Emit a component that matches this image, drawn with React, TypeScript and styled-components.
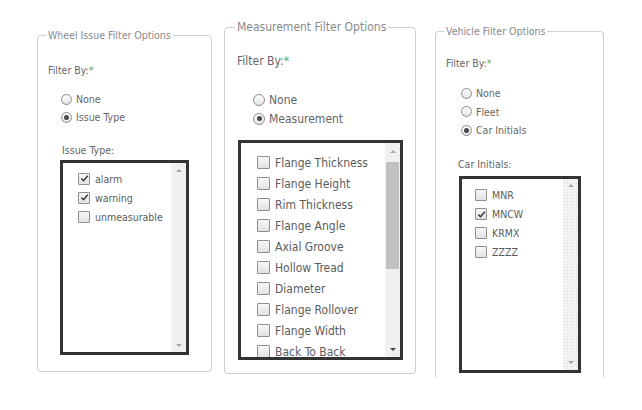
import React from 'react'
import styled, { createGlobalStyle } from 'styled-components'

type M = {
  top: number
  ml: number
  width: number
  height: number
  open?: boolean
  fs: number
  lh: number
  pad: number
  filterGap: number
  radioIndent: number
  radioGap: number
  rowH: number
  radio: number
  labelGap: number
  labelIndent: number
  boxGap: number
  boxIndent: number
  boxW: number
  boxH: number
  itemPadL: number
  itemPadT: number
  itemH: number
  check: number
  bar: number
  arrowH: number
  thumb?: [number, number]
  dotted?: boolean
  darkDown?: boolean
}

type PanelData = {
  title: string
  radios: string[]
  selected: number
  label?: string
  items: string[]
  checked: string[]
  m: M
}

const panels: PanelData[] = [
  {
    title: 'Wheel Issue Filter Options',
    radios: ['None', 'Issue Type'],
    selected: 1,
    label: 'Issue Type:',
    items: ['alarm', 'warning', 'unmeasurable'],
    checked: ['alarm', 'warning'],
    m: {
      top: 28, ml: 37, width: 175, height: 344, fs: 10.5, lh: 14, pad: 10,
      filterGap: 21, radioIndent: 13, radioGap: 13, rowH: 18, radio: 11,
      labelGap: 17, labelIndent: 14, boxGap: 3, boxIndent: 12, boxW: 129, boxH: 195,
      itemPadL: 15, itemPadT: 6, itemH: 19, check: 12, bar: 15, arrowH: 14,
    },
  },
  {
    title: 'Measurement Filter Options',
    radios: ['None', 'Measurement'],
    selected: 1,
    items: [
      'Flange Thickness', 'Flange Height', 'Rim Thickness', 'Flange Angle', 'Axial Groove',
      'Hollow Tread', 'Diameter', 'Flange Rollover', 'Flange Width', 'Back To Back',
    ],
    checked: [],
    m: {
      top: 19, ml: 12, width: 192, height: 355, fs: 12, lh: 16, pad: 12,
      filterGap: 18, radioIndent: 16, radioGap: 21, rowH: 19, radio: 12,
      labelGap: 0, labelIndent: 0, boxGap: 12, boxIndent: 1, boxW: 165, boxH: 220,
      itemPadL: 16, itemPadT: 9, itemH: 21, check: 13, bar: 15, arrowH: 16,
      thumb: [3, 107], darkDown: true,
    },
  },
  {
    title: 'Vehicle Filter Options',
    radios: ['None', 'Fleet', 'Car Initials'],
    selected: 2,
    label: 'Car Initials:',
    items: ['MNR', 'MNCW', 'KRMX', 'ZZZZ'],
    checked: ['MNCW'],
    m: {
      top: 24, ml: 19, width: 169, height: 353, open: true, fs: 10.5, lh: 14, pad: 10,
      filterGap: 18, radioIndent: 15, radioGap: 14, rowH: 18.5, radio: 11,
      labelGap: 17, labelIndent: 12, boxGap: 5, boxIndent: 13, boxW: 122, boxH: 197,
      itemPadL: 13, itemPadT: 7, itemH: 19, check: 12, bar: 15, arrowH: 14, dotted: true,
    },
  },
]

const GlobalStyle = createGlobalStyle`
  html, body { margin: 0; padding: 0; background: #ffffff; }
  body { font-family: "DejaVu Sans Condensed", "DejaVu Sans", sans-serif; }
`

const Page = styled.div`
  width: 642px;
  height: 410px;
  display: flex;
  align-items: flex-start;
  overflow: hidden;
`

const Fieldset = styled.fieldset<{ $m: M }>`
  box-sizing: border-box;
  margin: ${(p) => p.$m.top}px 0 0 ${(p) => p.$m.ml}px;
  width: ${(p) => p.$m.width}px;
  height: ${(p) => p.$m.height}px;
  padding: 0 ${(p) => p.$m.pad}px;
  border: 1px solid #cfcfcf;
  border-bottom: ${(p) => (p.$m.open ? 'none' : '1px solid #cfcfcf')};
  border-radius: ${(p) => (p.$m.open ? '4px 4px 0 0' : '4px')};
  font-size: ${(p) => p.$m.fs}px;
  line-height: ${(p) => p.$m.lh}px;
  color: #666;
  min-width: 0;
`

const Legend = styled.legend`
  padding: 0 2px;
  margin-left: -2px;
  color: #8a8a8a;
`

const FilterBy = styled.div<{ $m: M }>`
  margin-top: ${(p) => p.$m.filterGap}px;
  color: #666;
`

const Star = styled.span`
  color: #3cb371;
`

const RadioGroup = styled.div<{ $m: M }>`
  margin: ${(p) => p.$m.radioGap}px 0 0 ${(p) => p.$m.radioIndent}px;
  display: flex;
  flex-direction: column;
`

const RadioRow = styled.div<{ $m: M }>`
  display: flex;
  align-items: center;
  gap: 4px;
  height: ${(p) => p.$m.rowH}px;
`

const RadioDot = styled.span<{ $size: number; $on: boolean }>`
  box-sizing: border-box;
  width: ${(p) => p.$size}px;
  height: ${(p) => p.$size}px;
  border-radius: 50%;
  border: 1px solid #8c8c8c;
  background: linear-gradient(#ffffff, #e4e4e4);
  display: flex;
  align-items: center;
  justify-content: center;
  &::after {
    content: '';
    display: ${(p) => (p.$on ? 'block' : 'none')};
    width: ${(p) => Math.round(p.$size * 0.45)}px;
    height: ${(p) => Math.round(p.$size * 0.45)}px;
    border-radius: 50%;
    background: #4a4a4a;
  }
`

const FieldLabel = styled.div<{ $m: M }>`
  margin: ${(p) => p.$m.labelGap}px 0 0 ${(p) => p.$m.labelIndent}px;
`

const ListBox = styled.div<{ $m: M }>`
  box-sizing: border-box;
  margin: ${(p) => p.$m.boxGap}px 0 0 ${(p) => p.$m.boxIndent}px;
  width: ${(p) => p.$m.boxW}px;
  height: ${(p) => p.$m.boxH}px;
  border: 3px solid #333;
  display: flex;
  overflow: hidden;
  background: #fff;
`

const Items = styled.div<{ $m: M }>`
  flex: 1;
  padding: ${(p) => p.$m.itemPadT}px 0 0 ${(p) => p.$m.itemPadL}px;
  overflow: hidden;
`

const ItemRow = styled.div<{ $m: M }>`
  display: flex;
  align-items: center;
  gap: 5px;
  height: ${(p) => p.$m.itemH}px;
  color: #5c5c5c;
  white-space: nowrap;
`

const Box = styled.span<{ $size: number }>`
  box-sizing: border-box;
  flex: none;
  width: ${(p) => p.$size}px;
  height: ${(p) => p.$size}px;
  border: 1px solid #8f8f8f;
  border-radius: 1px;
  background: linear-gradient(#f7f7f7, #e2e2e2);
  display: flex;
  align-items: center;
  justify-content: center;
`

const Scrollbar = styled.div<{ $m: M }>`
  flex: none;
  width: ${(p) => p.$m.bar}px;
  display: flex;
  flex-direction: column;
  background: ${(p) =>
    p.$m.dotted
      ? 'radial-gradient(circle, #dcdcdc 0.6px, transparent 0.8px) 0 0 / 3px 3px, #f3f3f3'
      : '#f0f0f0'};
`

const ArrowCell = styled.div<{ $h: number }>`
  height: ${(p) => p.$h}px;
  display: flex;
  align-items: center;
  justify-content: center;
`

const Arrow = styled.span<{ $up: boolean; $dark?: boolean }>`
  width: 0;
  height: 0;
  border-left: 3px solid transparent;
  border-right: 3px solid transparent;
  ${(p) =>
    p.$up
      ? `border-bottom: 3px solid ${p.$dark ? '#555' : '#a8a8a8'};`
      : `border-top: 3px solid ${p.$dark ? '#444' : '#a8a8a8'};`}
`

const Track = styled.div`
  flex: 1;
`

const Thumb = styled.div`
  margin: 0 1px;
  background: #c1c1c1;
`

const Check = () => (
  <svg width="9" height="9" viewBox="0 0 9 9">
    <path d="M1.3 4.6 L3.5 6.8 L7.8 1.8" fill="none" stroke="#333" strokeWidth="1.4" />
  </svg>
)

const Panel = ({ data }: { data: PanelData }) => {
  const m = data.m
  return (
    <Fieldset $m={m}>
      <Legend>{data.title}</Legend>
      <FilterBy $m={m}>
        Filter By:<Star>*</Star>
      </FilterBy>
      <RadioGroup $m={m}>
        {data.radios.map((r, i) => (
          <RadioRow key={r} $m={m}>
            <RadioDot $size={m.radio} $on={i === data.selected} />
            {r}
          </RadioRow>
        ))}
      </RadioGroup>
      {data.label && <FieldLabel $m={m}>{data.label}</FieldLabel>}
      <ListBox $m={m}>
        <Items $m={m}>
          {data.items.map((it) => (
            <ItemRow key={it} $m={m}>
              <Box $size={m.check}>{data.checked.includes(it) && <Check />}</Box>
              {it}
            </ItemRow>
          ))}
        </Items>
        <Scrollbar $m={m}>
          <ArrowCell $h={m.arrowH}>
            <Arrow $up />
          </ArrowCell>
          <Track>
            {m.thumb && <Thumb style={{ marginTop: m.thumb[0], height: m.thumb[1] }} />}
          </Track>
          <ArrowCell $h={m.arrowH}>
            <Arrow $up={false} $dark={m.darkDown} />
          </ArrowCell>
        </Scrollbar>
      </ListBox>
    </Fieldset>
  )
}

const App = () => (
  <>
    <GlobalStyle />
    <Page>
      {panels.map((p) => (
        <Panel key={p.title} data={p} />
      ))}
    </Page>
  </>
)

export default App
